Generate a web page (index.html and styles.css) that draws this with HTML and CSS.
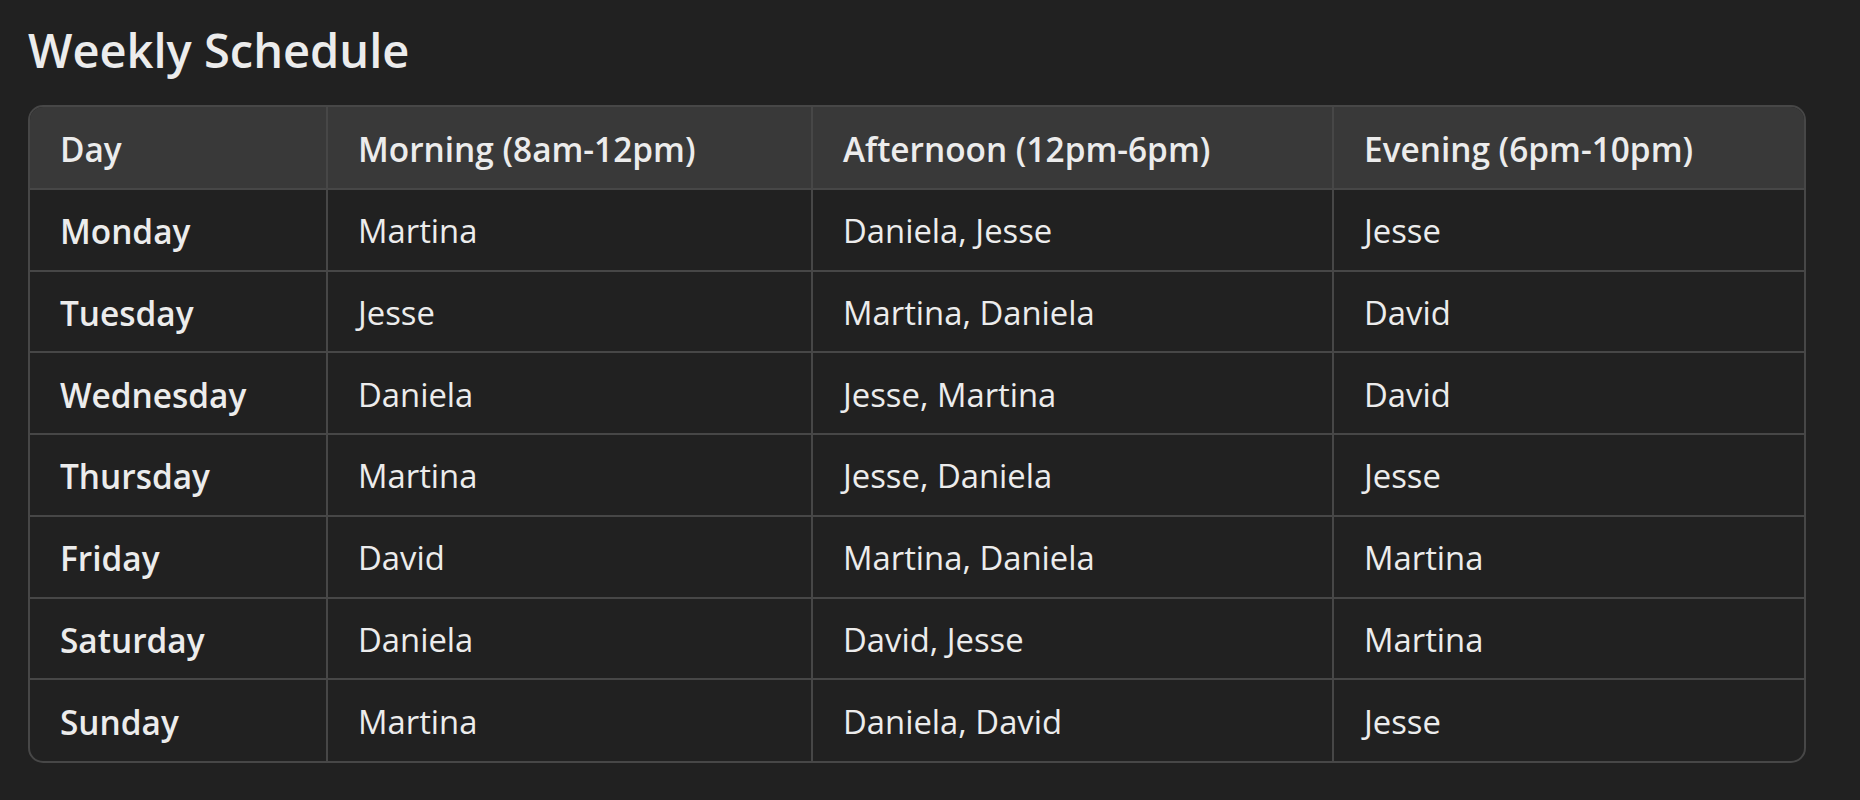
FILE: index.html
```html
<!DOCTYPE html>
<html lang="en">
<head>
<meta charset="utf-8">
<title>Weekly Schedule</title>
<link rel="stylesheet" href="styles.css">
</head>
<body>
<main class="page">
  <h1 class="title">Weekly Schedule</h1>
  <div class="table-wrap">
    <table class="schedule">
      <colgroup>
        <col class="c-day">
        <col class="c-morning">
        <col class="c-afternoon">
        <col class="c-evening">
      </colgroup>
      <thead>
        <tr>
          <th>Day</th>
          <th>Morning (8am-12pm)</th>
          <th>Afternoon (12pm-6pm)</th>
          <th>Evening (6pm-10pm)</th>
        </tr>
      </thead>
      <tbody>
        <tr><th>Monday</th><td>Martina</td><td>Daniela, Jesse</td><td>Jesse</td></tr>
        <tr><th>Tuesday</th><td>Jesse</td><td>Martina, Daniela</td><td>David</td></tr>
        <tr><th>Wednesday</th><td>Daniela</td><td>Jesse, Martina</td><td>David</td></tr>
        <tr><th>Thursday</th><td>Martina</td><td>Jesse, Daniela</td><td>Jesse</td></tr>
        <tr><th>Friday</th><td>David</td><td>Martina, Daniela</td><td>Martina</td></tr>
        <tr><th>Saturday</th><td>Daniela</td><td>David, Jesse</td><td>Martina</td></tr>
        <tr><th>Sunday</th><td>Martina</td><td>Daniela, David</td><td>Jesse</td></tr>
      </tbody>
    </table>
  </div>
</main>
</body>
</html>
```
FILE: styles.css
```css
html, body {
  margin: 0;
  padding: 0;
  background: #212121;
}
body {
  font-family: "Segoe UI", "Open Sans", "Noto Sans", sans-serif;
  color: #ececec;
}
.page {
  padding: 18px 54px 0 28px;
}
.title {
  margin: 0 0 23px 0;
  font-size: 47px;
  font-weight: 600;
  line-height: 64px;
  color: #ececec;
}
.table-wrap {
  border: 2px solid #474747;
  border-radius: 15px;
  overflow: hidden;
}
.schedule {
  width: 100%;
  border-collapse: collapse;
  table-layout: fixed;
  font-size: 32.8px;
  line-height: 44px;
}
.c-day { width: 297px; }
.c-morning { width: 485px; }
.c-afternoon { width: 521px; }
.c-evening { width: auto; }
.schedule th,
.schedule td {
  box-sizing: border-box;
  height: 81.75px;
  padding: 3px 30px 0 30px;
  text-align: left;
  vertical-align: middle;
  border-right: 2px solid #474747;
  border-bottom: 2px solid #474747;
  white-space: nowrap;
}
.schedule th {
  font-weight: 600;
  font-size: 33.4px;
}
.schedule td { font-weight: 400; }
.schedule tr > :last-child { border-right: none; }
.schedule tbody tr:last-child > * { border-bottom: none; }
.schedule thead th {
  background: #393939;
}
```
